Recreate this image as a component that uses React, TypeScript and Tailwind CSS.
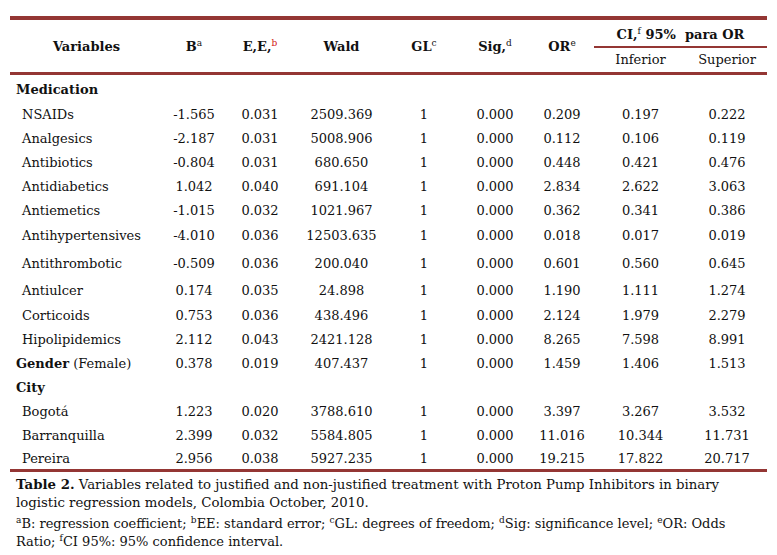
import React from "react";

type Row = {
  label: string;
  kind: "section" | "item" | "sectionData";
  suffix?: string;
  h: number;
  vals?: string[];
};

const ROWS: Row[] = [
  { label: "Medication", kind: "section", h: 28 },
  { label: "NSAIDs", kind: "item", h: 24, vals: ["-1.565", "0.031", "2509.369", "1", "0.000", "0.209", "0.197", "0.222"] },
  { label: "Analgesics", kind: "item", h: 24, vals: ["-2.187", "0.031", "5008.906", "1", "0.000", "0.112", "0.106", "0.119"] },
  { label: "Antibiotics", kind: "item", h: 23, vals: ["-0.804", "0.031", "680.650", "1", "0.000", "0.448", "0.421", "0.476"] },
  { label: "Antidiabetics", kind: "item", h: 24, vals: ["1.042", "0.040", "691.104", "1", "0.000", "2.834", "2.622", "3.063"] },
  { label: "Antiemetics", kind: "item", h: 24, vals: ["-1.015", "0.032", "1021.967", "1", "0.000", "0.362", "0.341", "0.386"] },
  { label: "Antihypertensives", kind: "item", h: 27, vals: ["-4.010", "0.036", "12503.635", "1", "0.000", "0.018", "0.017", "0.019"] },
  { label: "Antithrombotic", kind: "item", h: 28, vals: ["-0.509", "0.036", "200.040", "1", "0.000", "0.601", "0.560", "0.645"] },
  { label: "Antiulcer", kind: "item", h: 26, vals: ["0.174", "0.035", "24.898", "1", "0.000", "1.190", "1.111", "1.274"] },
  { label: "Corticoids", kind: "item", h: 24, vals: ["0.753", "0.036", "438.496", "1", "0.000", "2.124", "1.979", "2.279"] },
  { label: "Hipolipidemics", kind: "item", h: 24, vals: ["2.112", "0.043", "2421.128", "1", "0.000", "8.265", "7.598", "8.991"] },
  { label: "Gender", suffix: " (Female)", kind: "sectionData", h: 24, vals: ["0.378", "0.019", "407.437", "1", "0.000", "1.459", "1.406", "1.513"] },
  { label: "City", kind: "section", h: 24 },
  { label: "Bogotá", kind: "item", h: 24, vals: ["1.223", "0.020", "3788.610", "1", "0.000", "3.397", "3.267", "3.532"] },
  { label: "Barranquilla", kind: "item", h: 23, vals: ["2.399", "0.032", "5584.805", "1", "0.000", "11.016", "10.344", "11.731"] },
  { label: "Pereira", kind: "item", h: 24, vals: ["2.956", "0.038", "5927.235", "1", "0.000", "19.215", "17.822", "20.717"] },
];

const WIDTHS = [153, 62, 70, 93, 72, 70, 64, 93, 80];

// superscript note marker, raised with vertical-align so it stays in flow
function Sup({ children, red }: { children: React.ReactNode; red?: boolean }) {
  return (
    <span className={`text-[9px] leading-none font-normal align-[5px] ${red ? "text-[#d01010]" : ""}`}>
      {children}
    </span>
  );
}

export default function App() {
  return (
    <div className="w-[777px] h-[555px] bg-white text-[#111] font-['DejaVu_Serif',serif] text-[13px] overflow-hidden">
      <div className="pt-[16px] pl-[10px]">
        <table className="border-collapse table-fixed w-[757px]">
          <colgroup>
            {WIDTHS.map((w, i) => (
              <col key={i} style={{ width: w }} />
            ))}
          </colgroup>
          <thead className="font-bold">
            <tr className="border-t-4 border-[#943634] h-[29px]">
              <th rowSpan={2} className="font-bold pt-[2px]">Variables</th>
              <th rowSpan={2} className="font-bold pt-[2px]">
                B<Sup>a</Sup>
              </th>
              <th rowSpan={2} className="font-bold pt-[2px]">
                E,E,<Sup red>b</Sup>
              </th>
              <th rowSpan={2} className="font-bold pt-[2px]">Wald</th>
              <th rowSpan={2} className="font-bold pt-[2px]">
                GL<Sup>c</Sup>
              </th>
              <th rowSpan={2} className="font-bold pt-[2px]">
                Sig,<Sup>d</Sup>
              </th>
              <th rowSpan={2} className="font-bold pt-[2px]">
                OR<Sup>e</Sup>
              </th>
              <th colSpan={2} className="font-bold border-b-2 border-[#943634] whitespace-pre pt-[4px]">
                CI,<Sup>f</Sup> 95%  para OR
              </th>
            </tr>
            <tr className="h-[26px] border-b-[3px] border-[#943634]">
              <th className="font-normal">Inferior</th>
              <th className="font-normal">Superior</th>
            </tr>
          </thead>
          <tbody className="border-b-[3px] border-[#943634]">
            {ROWS.map((r) => (
              <tr key={r.label} style={{ height: r.h }}>
                <td
                  className={`whitespace-nowrap pt-[4px] ${r.kind === "item" ? "pl-[12px]" : "pl-[6px]"} ${
                    r.kind === "section" ? "font-bold" : ""
                  }`}
                  colSpan={r.vals ? 1 : 9}
                >
                  {r.kind === "sectionData" ? (
                    <>
                      <span className="font-bold">{r.label}</span>
                      {r.suffix}
                    </>
                  ) : (
                    r.label
                  )}
                </td>
                {r.vals?.map((v, i) => (
                  <td key={i} className="text-center whitespace-nowrap pt-[4px]">
                    {v}
                  </td>
                ))}
              </tr>
            ))}
          </tbody>
        </table>
      </div>
      <div className="pl-[16px] pr-[40px] pt-[4px] leading-[18px] text-[13.3px]">
        <p>
          <span className="font-bold">Table 2.</span> Variables related to justified and non-justified treatment with
          Proton Pump Inhibitors in binary logistic regression models, Colombia October, 2010.
        </p>
        <p className="mt-[3px] text-[13px]">
          <Sup>a</Sup>B: regression coefficient; <Sup>b</Sup>EE: standard error; <Sup>c</Sup>GL: degrees of freedom;{" "}
          <Sup>d</Sup>Sig: significance level; <Sup>e</Sup>OR: Odds Ratio; <Sup>f</Sup>CI 95%: 95% confidence interval.
        </p>
      </div>
    </div>
  );
}
